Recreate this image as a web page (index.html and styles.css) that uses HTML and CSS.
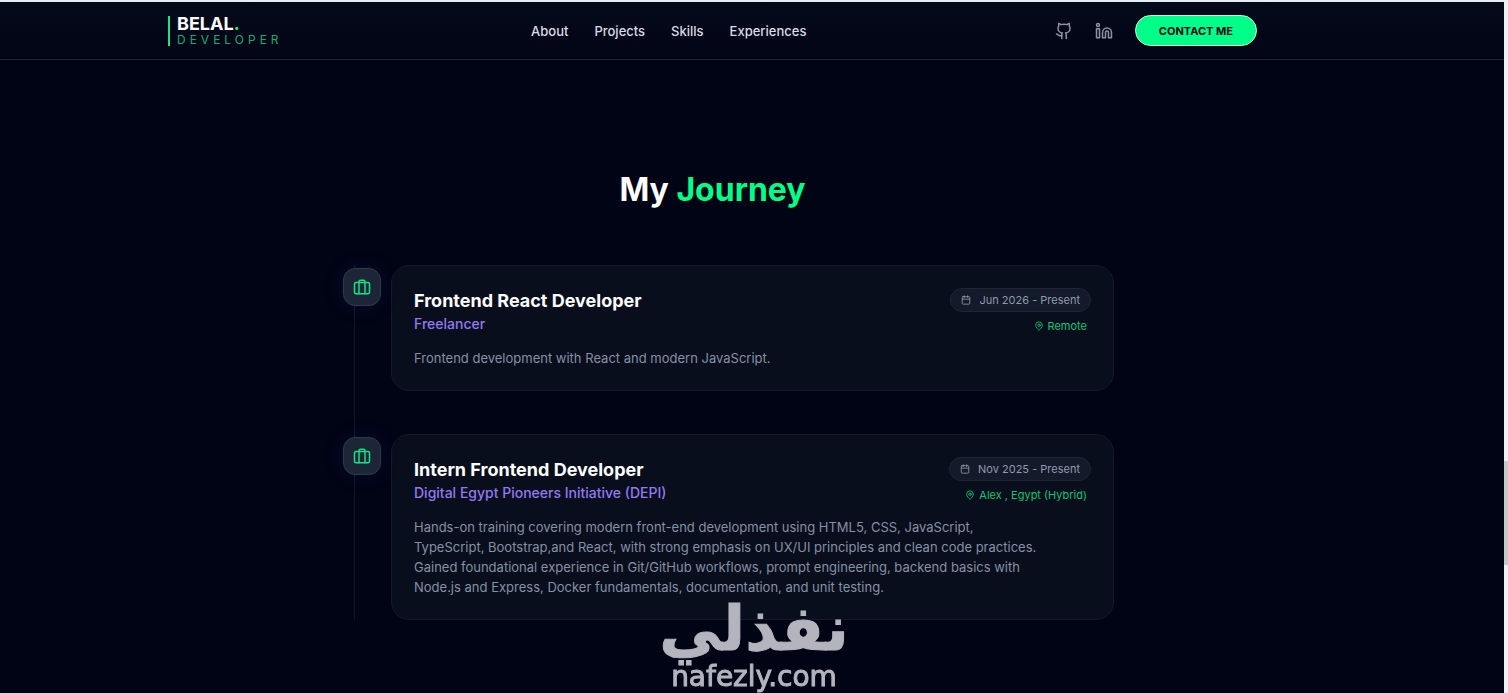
FILE: index.html
```html
<!DOCTYPE html>
<html lang="en">
<head>
    <meta charset="UTF-8">
    <meta name="viewport" content="width=device-width, initial-scale=1.0">
    <title>Belal. Developer</title>
    <link rel="stylesheet" href="styles.css">
</head>
<body>

    <!-- Navbar -->
    <header class="navbar">
        <div class="navbar-inner">
            <a href="#" class="logo">
                <span class="logo-name">BELAL<span class="accent">.</span></span>
                <span class="logo-role">DEVELOPER</span>
            </a>

            <nav class="nav-links">
                <a href="#about">About</a>
                <a href="#projects">Projects</a>
                <a href="#skills">Skills</a>
                <a href="#experiences">Experiences</a>
            </nav>

            <div class="nav-actions">
                <a href="#" class="social" aria-label="GitHub">
                    <svg viewBox="0 0 24 24"><path d="M15 22v-4a4.8 4.8 0 0 0-1-3.5c3 0 6-2 6-5.5.08-1.25-.27-2.48-1-3.5.28-1.15.28-2.35 0-3.5 0 0-1 0-3 1.5-2.64-.5-5.36-.5-8 0C6 2 5 2 5 2c-.3 1.15-.3 2.35 0 3.5A5.403 5.403 0 0 0 4 9c0 3.5 3 5.5 6 5.5-.39.49-.68 1.05-.85 1.65-.17.6-.22 1.23-.15 1.85v4"/><path d="M9 18c-4.51 2-5-2-7-2"/></svg>
                </a>
                <a href="#" class="social" aria-label="LinkedIn">
                    <svg viewBox="0 0 24 24"><path d="M16 8a6 6 0 0 1 6 6v7h-4v-7a2 2 0 0 0-2-2 2 2 0 0 0-2 2v7h-4v-7a6 6 0 0 1 6-6z"/><rect x="2" y="9" width="4" height="12"/><circle cx="4" cy="4" r="2"/></svg>
                </a>
                <button type="button" class="contact-btn">CONTACT ME</button>
            </div>
        </div>
    </header>

    <!-- Experience timeline -->
    <main class="journey" id="experiences">
        <h1>My <span class="accent">Journey</span></h1>

        <div class="timeline">
            <article class="entry">
                <div class="entry-icon">
                    <svg viewBox="0 0 24 24"><rect x="2" y="6" width="20" height="15" rx="2"/><path d="M16 21V5a2 2 0 0 0-2-2h-4a2 2 0 0 0-2 2v16"/></svg>
                </div>
                <div class="card">
                    <div class="card-head">
                        <div>
                            <h2>Frontend React Developer</h2>
                            <h3>Freelancer</h3>
                        </div>
                        <div class="meta">
                            <span class="date">
                                <svg viewBox="0 0 24 24"><path d="M8 2v4M16 2v4M3 10h18"/><rect x="3" y="4" width="18" height="18" rx="2"/></svg>
                                Jun 2026 - Present
                            </span>
                            <span class="place">
                                <svg viewBox="0 0 24 24"><path d="M20 10c0 5-5.5 10.2-7.4 11.8a1 1 0 0 1-1.2 0C9.5 20.2 4 15 4 10a8 8 0 0 1 16 0"/><circle cx="12" cy="10" r="3"/></svg>
                                Remote
                            </span>
                        </div>
                    </div>
                    <p>Frontend development with React and modern JavaScript.</p>
                </div>
            </article>

            <article class="entry">
                <div class="entry-icon">
                    <svg viewBox="0 0 24 24"><rect x="2" y="6" width="20" height="15" rx="2"/><path d="M16 21V5a2 2 0 0 0-2-2h-4a2 2 0 0 0-2 2v16"/></svg>
                </div>
                <div class="card">
                    <div class="card-head">
                        <div>
                            <h2>Intern Frontend Developer</h2>
                            <h3>Digital Egypt Pioneers Initiative (DEPI)</h3>
                        </div>
                        <div class="meta">
                            <span class="date">
                                <svg viewBox="0 0 24 24"><path d="M8 2v4M16 2v4M3 10h18"/><rect x="3" y="4" width="18" height="18" rx="2"/></svg>
                                Nov 2025 - Present
                            </span>
                            <span class="place">
                                <svg viewBox="0 0 24 24"><path d="M20 10c0 5-5.5 10.2-7.4 11.8a1 1 0 0 1-1.2 0C9.5 20.2 4 15 4 10a8 8 0 0 1 16 0"/><circle cx="12" cy="10" r="3"/></svg>
                                Alex , Egypt (Hybrid)
                            </span>
                        </div>
                    </div>
                    <p>Hands-on training covering modern front-end development using HTML5, CSS, JavaScript, TypeScript, Bootstrap,and React, with strong emphasis on UX/UI principles and clean code practices. Gained foundational experience in Git/GitHub workflows, prompt engineering, backend basics with Node.js and Express, Docker fundamentals, documentation, and unit testing.</p>
                </div>
            </article>
        </div>
    </main>

    <!-- Watermark over the page -->
    <div class="watermark">
        <span class="watermark-ar" lang="ar" dir="rtl">نفذلي</span>
        <span class="watermark-en">nafezly.com</span>
    </div>

    <div class="scroll-thumb"></div>

</body>
</html>
```
FILE: styles.css
```css
* {
    margin: 0;
    padding: 0;
    box-sizing: border-box;
}

body {
    font-family: 'Inter', sans-serif;
    background-color: #010414;
    color: #fff;
    min-height: 100vh;
    border-top: 2px solid #e6edf3;
    border-right: 4px solid #edf0f5;
}

a {
    color: inherit;
    text-decoration: none;
}

svg {
    display: block;
    fill: none;
    stroke: currentColor;
    stroke-width: 2;
    stroke-linecap: round;
    stroke-linejoin: round;
}

.accent {
    color: #00ff88;
}

/* Navbar */
.navbar {
    height: 58px;
    padding-right: 79px;
    background: linear-gradient(#050a1b, #010414);
    border-bottom: 1px solid #1f2534;
}

.navbar-inner {
    max-width: 1089px;
    height: 100%;
    margin: 0 auto;
    display: flex;
    justify-content: space-between;
    align-items: center;
}

.logo {
    display: flex;
    flex-direction: column;
    gap: 2px;
    padding-left: 7px;
    border-left: 2px solid #1fe388;
}

.logo-name {
    font-size: 18px;
    font-weight: 700;
    line-height: 16px;
}

.logo-role {
    font-size: 12px;
    line-height: 12px;
    letter-spacing: 4px;
    color: #14ac74;
}

.nav-links {
    display: flex;
    gap: 26px;
    font-size: 13px;
    font-weight: 500;
    color: #d8dce6;
}

.nav-actions {
    display: flex;
    align-items: center;
    gap: 22px;
}

.social svg {
    width: 18px;
    height: 18px;
    color: #8b94a5;
}

.contact-btn {
    height: 31px;
    padding: 0 23px;
    font-family: inherit;
    font-size: 11px;
    font-weight: 700;
    color: #010414;
    background: #00ff88;
    border: 1px solid #b9fbdc;
    border-radius: 16px;
    cursor: pointer;
}

/* Journey section */
.journey {
    padding: 108px 79px 72px 0;
}

.journey h1 {
    font-size: 32px;
    font-weight: 700;
    line-height: 44px;
    text-align: center;
}

.timeline {
    position: relative;
    max-width: 803px;
    margin: 53px auto 0;
    padding-left: 32px;
    display: flex;
    flex-direction: column;
    gap: 43px;
}

/* Vertical line behind the icons */
.timeline::before {
    content: "";
    position: absolute;
    top: 0;
    bottom: 0;
    left: 43px;
    width: 1px;
    background: #111625;
}

.entry {
    display: flex;
    align-items: flex-start;
    gap: 10px;
}

.entry-icon {
    position: relative;
    flex: none;
    display: grid;
    place-items: center;
    width: 38px;
    height: 38px;
    margin-top: 3px;
    color: #18df84;
    background: #1c2637;
    border: 1px solid #303949;
    border-radius: 12px;
    box-shadow: 0 0 20px rgba(80, 70, 220, 0.15);
}

.entry-icon svg {
    width: 18px;
    height: 18px;
}

.card {
    flex: 1;
    padding: 22px;
    background: #080e1c;
    border: 1px solid #121928;
    border-radius: 18px;
}

.card-head {
    display: flex;
    justify-content: space-between;
}

.card h2 {
    font-size: 18px;
    font-weight: 700;
    line-height: 26px;
}

.card h3 {
    font-size: 14px;
    font-weight: 500;
    line-height: 20px;
    color: #9279f2;
}

.card p {
    max-width: 626px;
    margin-top: 14px;
    font-size: 13px;
    line-height: 20px;
    color: #8591a5;
}

.meta {
    display: flex;
    flex-direction: column;
    align-items: flex-end;
    gap: 6px;
    font-size: 11px;
}

.date,
.place {
    display: flex;
    align-items: center;
}

.date {
    gap: 8px;
    height: 24px;
    padding: 0 10px;
    color: #8f9aad;
    background: #131a29;
    border: 1px solid #1e2635;
    border-radius: 12px;
}

.date svg,
.place svg {
    width: 10px;
    height: 10px;
}

.place {
    gap: 4px;
    padding-right: 4px;
    line-height: 16px;
    color: #10c474;
}

/* Watermark */
.watermark {
    position: fixed;
    left: 0;
    right: 0;
    bottom: 0;
    display: flex;
    flex-direction: column;
    align-items: center;
    font-family: 'DejaVu Sans', sans-serif;
    color: #b3b4bd;
    pointer-events: none;
}

.watermark-ar {
    font-size: 62px;
    font-weight: 700;
    line-height: 64px;
    -webkit-text-stroke: 1px #b3b4bd;
}

.watermark-en {
    font-size: 28px;
    line-height: 32px;
    -webkit-text-stroke: 1px #b3b4bd;
}

/* Scrollbar thumb */
.scroll-thumb {
    position: fixed;
    top: 461px;
    right: 0;
    width: 4px;
    height: 104px;
    background: #c6c8cb;
}
```
